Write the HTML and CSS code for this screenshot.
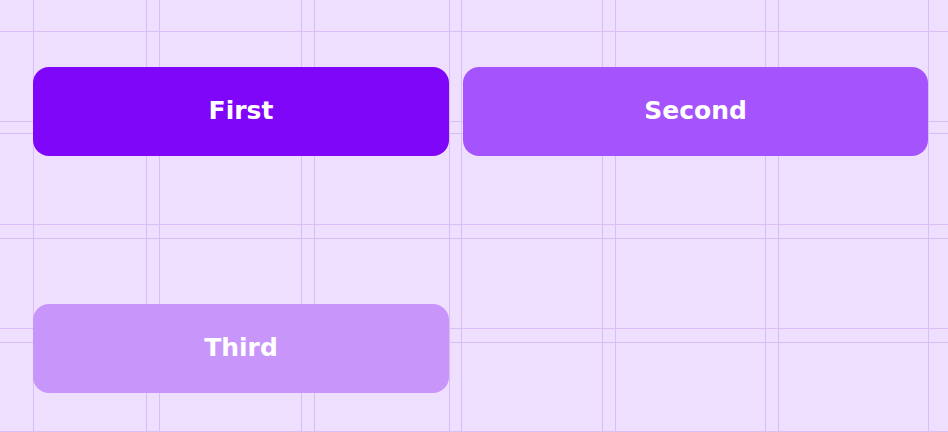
FILE: index.html
```html
<!DOCTYPE html>
<html lang="en">
<head>
<meta charset="utf-8">
<title>Grid</title>
<link rel="stylesheet" href="styles.css">
</head>
<body>
<div class="stage">
  <svg class="guides" width="948" height="432" viewBox="0 0 948 432" aria-hidden="true">
    <g stroke="#d8bdf6" stroke-width="1">
      <line x1="33.5" y1="0" x2="33.5" y2="432"/>
      <line x1="146.5" y1="0" x2="146.5" y2="432"/>
      <line x1="159.5" y1="0" x2="159.5" y2="432"/>
      <line x1="301.5" y1="0" x2="301.5" y2="432"/>
      <line x1="314.5" y1="0" x2="314.5" y2="432"/>
      <line x1="449.5" y1="0" x2="449.5" y2="432"/>
      <line x1="461.5" y1="0" x2="461.5" y2="432"/>
      <line x1="602.5" y1="0" x2="602.5" y2="432"/>
      <line x1="615.5" y1="0" x2="615.5" y2="432"/>
      <line x1="765.5" y1="0" x2="765.5" y2="432"/>
      <line x1="778.5" y1="0" x2="778.5" y2="432"/>
      <line x1="928.5" y1="0" x2="928.5" y2="432"/>
      <line x1="0" y1="31.5" x2="948" y2="31.5"/>
      <line x1="0" y1="121.5" x2="948" y2="121.5"/>
      <line x1="0" y1="133.5" x2="948" y2="133.5"/>
      <line x1="0" y1="224.5" x2="948" y2="224.5"/>
      <line x1="0" y1="238.5" x2="948" y2="238.5"/>
      <line x1="0" y1="328.5" x2="948" y2="328.5"/>
      <line x1="0" y1="342.5" x2="948" y2="342.5"/>
      <line x1="0" y1="431.5" x2="948" y2="431.5"/>
    </g>
  </svg>
  <div class="grid">
    <button class="btn btn-first">First</button>
    <button class="btn btn-second">Second</button>
    <button class="btn btn-third">Third</button>
  </div>
</div>
</body>
</html>
```
FILE: styles.css
```css
html, body {
  margin: 0;
  padding: 0;
  background: #efdfff;
}
body {
  width: 948px;
  height: 432px;
  overflow: hidden;
  font-family: "DejaVu Sans", "Open Sans", sans-serif;
}
.stage {
  position: relative;
  width: 948px;
  height: 432px;
}
.guides {
  position: absolute;
  left: 0;
  top: 0;
  z-index: 0;
}
.grid {
  position: relative;
  z-index: 1;
  display: grid;
  grid-template-columns: 416px 465px;
  grid-template-rows: 89px 89px;
  column-gap: 14px;
  row-gap: 148px;
  padding: 67px 0 0 33px;
}
.btn {
  border: 0;
  border-radius: 16px;
  color: #ffffff;
  font-family: inherit;
  font-size: 25px;
  font-weight: 700;
  line-height: 1;
  display: flex;
  align-items: center;
  justify-content: center;
  padding: 0 0 3px;
  margin: 0;
}
.btn-first { background: #8006fa; }
.btn-second { background: #a553fd; }
.btn-third { background: #c895fb; }
```
